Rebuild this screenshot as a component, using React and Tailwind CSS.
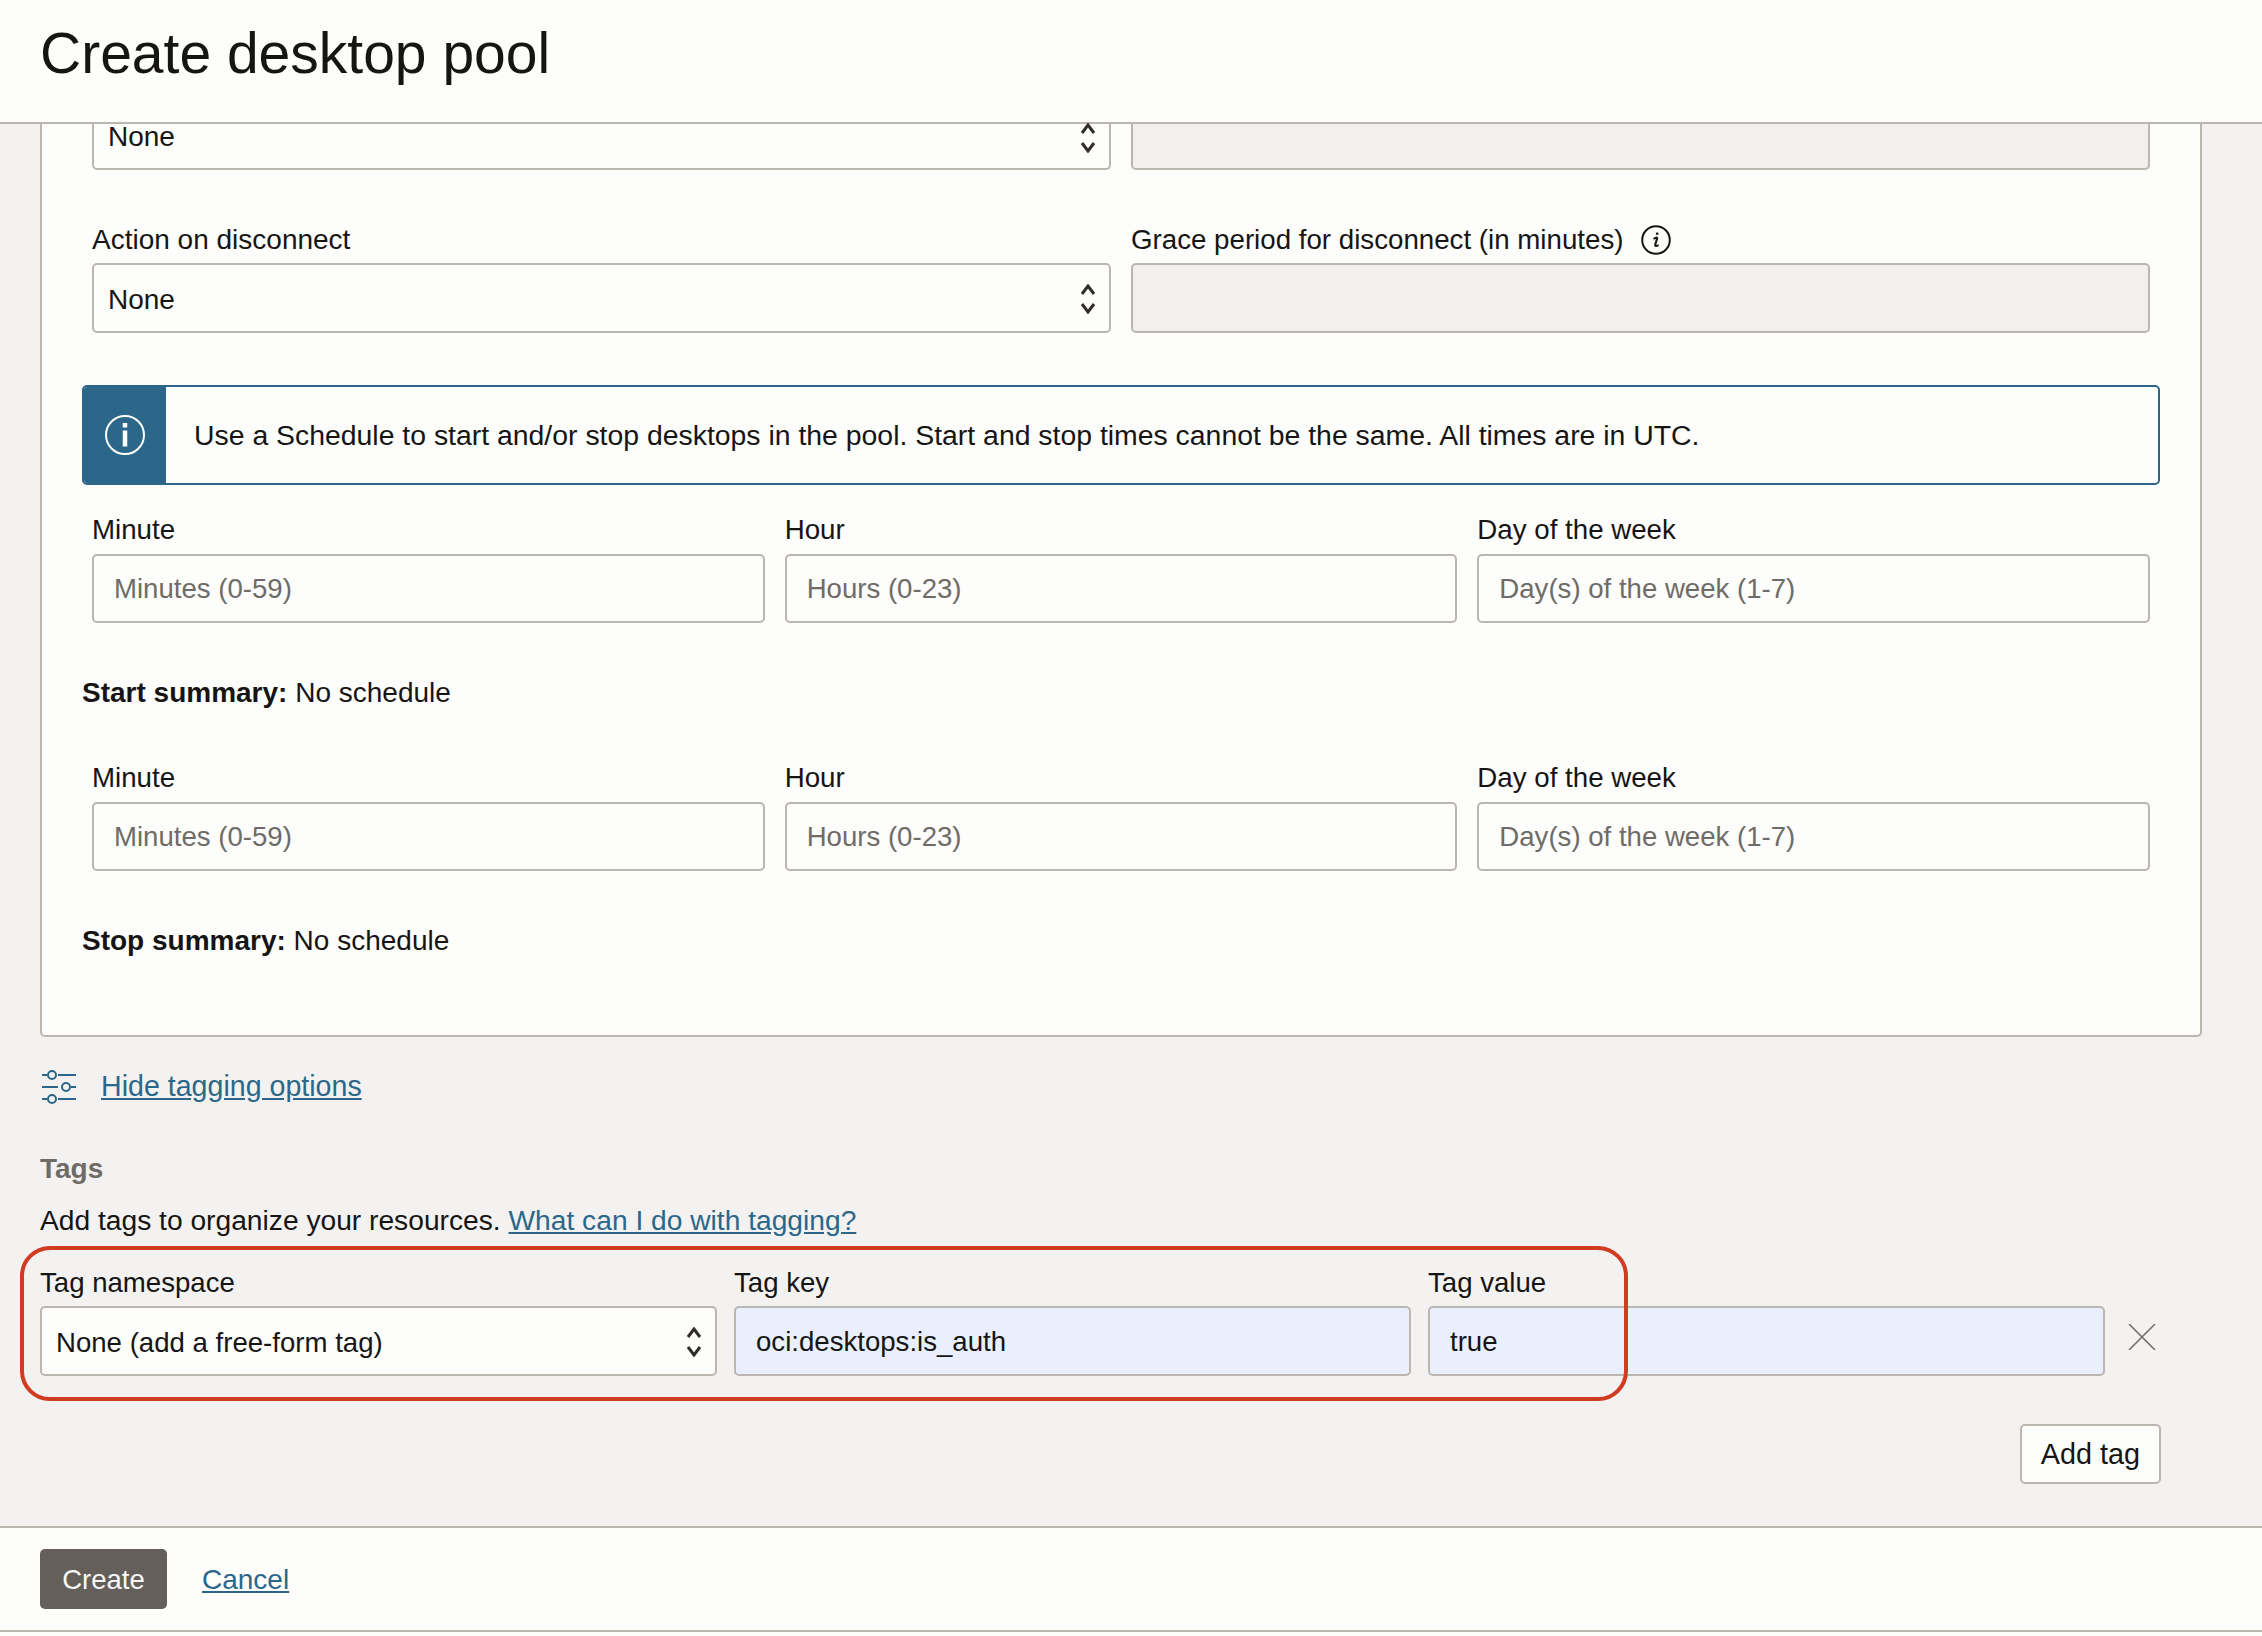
import React from "react";

const scheduleFields = [
  { label: "Minute", placeholder: "Minutes (0-59)" },
  { label: "Hour", placeholder: "Hours (0-23)" },
  { label: "Day of the week", placeholder: "Day(s) of the week (1-7)" },
];

function Chevrons({ className = "mt-[2px]" }) {
  return (
    <svg width="16" height="30" viewBox="0 0 16 30" fill="none" stroke="#312d2a" strokeWidth="3" className={className}>
      <path d="M2 10 8 2l6 8" />
      <path d="M2 20l6 8 6-8" />
    </svg>
  );
}

function Select({ value }) {
  return (
    <div className="flex h-[70px] items-center justify-between rounded-[5px] border-2 border-[#bcb6b1] bg-[#fdfdfc] pl-[14px] pr-[13px]">
      <span className="mt-[3px] leading-[24px]">{value}</span>
      <Chevrons />
    </div>
  );
}

function ScheduleRow({ summary, top }) {
  return (
    <>
      <div className={`grid grid-cols-3 gap-x-[20px] px-[10px] ${top}`}>
        {scheduleFields.map((field) => (
          <div key={field.label}>
            <div className="mb-[8px] h-[34px] text-[27.7px] leading-[36px]">{field.label}</div>
            <div className="flex h-[69px] items-center rounded-[5px] border-2 border-[#bcb6b1] bg-[#fdfdfc] pl-[20px] text-[27.6px] text-[#6f6b67]">
              {field.placeholder}
            </div>
          </div>
        ))}
      </div>
      <div className="mt-[52px] h-[34px] leading-[36px]">
        <span className="font-bold">{summary}:</span> No schedule
      </div>
    </>
  );
}

export default function App() {
  return (
    <div className="flex h-[1636px] flex-col overflow-hidden bg-[#f3f2f1] font-['Liberation_Sans',Arial,sans-serif] text-[28px] text-[#161513]">
      <header className="h-[124px] shrink-0 border-b-2 border-[#bcb6b1] bg-[#fdfdfc] pl-[40px] pt-[19px] text-[57px] leading-[68px]">
        Create desktop pool
      </header>

      <main className="min-h-0 flex-1 px-[40px]">
        <div className="h-[913px] w-[2162px] rounded-b-[5px] border-x-2 border-b-2 border-[#bcb6b1] bg-[#fdfdfc] px-[40px]">
          {/* this row is scrolled under the header, so its fields have no top edge */}
          <div className="grid grid-cols-2 gap-x-[20px] px-[10px]">
            <div className="flex h-[46px] items-start justify-between rounded-b-[5px] border-x-2 border-b-2 border-[#bcb6b1] pl-[14px] pr-[13px]">
              <span className="mt-[1px] leading-[24px]">None</span>
              <Chevrons className="-mt-[1px]" />
            </div>
            <div className="h-[46px] rounded-b-[5px] border-x-2 border-b-2 border-[#bcb6b1] bg-[#f1f0ef]" />
          </div>

          <div className="mt-[53px] grid grid-cols-2 gap-x-[20px] px-[10px]">
            <div>
              <div className="mb-[6px] h-[34px] leading-[34px]">Action on disconnect</div>
              <Select value="None" />
            </div>
            <div>
              <div className="mb-[6px] flex h-[34px] items-center gap-[18px] text-[27.7px] leading-[34px]">
                Grace period for disconnect (in minutes)
                <svg width="30" height="30" viewBox="0 0 30 30" fill="none" stroke="#161513" strokeWidth="2">
                  <circle cx="15" cy="15" r="13.8" />
                  <path d="M16.2 7.6v2.2" strokeWidth="2.4" />
                  <path d="M12.6 14q3-2.4 3.6-.6l-2 6.2q-.5 2.6 3.4.6" />
                </svg>
              </div>
              <div className="h-[70px] rounded-[5px] border-2 border-[#bcb6b1] bg-[#f1f0ef]" />
            </div>
          </div>

          <div className="mt-[52px] flex h-[100px] overflow-hidden rounded-[5px] border-2 border-[#2c6789]">
            <div className="flex w-[82px] shrink-0 items-center justify-center bg-[#2c6789]">
              <svg width="42" height="42" viewBox="0 0 42 42" fill="none" stroke="#fff" strokeWidth="2">
                <circle cx="21" cy="21" r="19" />
                <path d="M21 9v4.5" strokeWidth="4.5" />
                <path d="M21 16.5v16" strokeWidth="4.5" />
              </svg>
            </div>
            <div className="flex items-center pl-[28px] text-[28.4px]">
              Use a Schedule to start and/or stop desktops in the pool. Start and stop times cannot be the same. All times are in UTC.
            </div>
          </div>

          <ScheduleRow summary="Start summary" top="mt-[27px]" />
          <ScheduleRow summary="Stop summary" top="mt-[51px]" />
        </div>

        <div className="mt-[32px] flex h-[36px] items-center">
          <svg width="34" height="36" viewBox="0 0 34 36" fill="none" stroke="#2c6789" strokeWidth="2" className="ml-[2px]">
            <path d="M0 6h5M16 6h18M0 18h16M29 18h5M0 30h5M16 30h18" />
            <circle cx="10" cy="6" r="4" />
            <circle cx="24" cy="18" r="4" />
            <circle cx="10" cy="30" r="4" />
          </svg>
          <a className="ml-[25px] -mt-[2px] text-[28.6px] text-[#2c6789] underline">Hide tagging options</a>
        </div>

        <div className="mt-[46px] h-[34px] font-bold leading-[36px] text-[#6f6b67]">Tags</div>
        <div className="mt-[18px] h-[34px] text-[28.2px] leading-[35px]">
          Add tags to organize your resources. <a className="text-[#2c6789] underline">What can I do with tagging?</a>
        </div>

        <div className="relative mt-[29px] flex items-end">
          <div className="grid w-[2065px] grid-cols-3 gap-x-[17px] text-[27.6px]">
            <div>
              <div className="mb-[6px] h-[34px] leading-[34px]">Tag namespace</div>
              <Select value="None (add a free-form tag)" />
            </div>
            <div>
              <div className="mb-[6px] h-[34px] leading-[34px]">Tag key</div>
              <div className="flex h-[70px] items-center rounded-[5px] border-2 border-[#bcb6b1] bg-[#e9effd] pl-[20px] pt-[2px]">oci:desktops:is_auth</div>
            </div>
            <div>
              <div className="mb-[6px] h-[34px] leading-[34px]">Tag value</div>
              <div className="flex h-[70px] items-center rounded-[5px] border-2 border-[#bcb6b1] bg-[#e9effd] pl-[20px] pt-[2px]">true</div>
            </div>
          </div>
          <svg width="28" height="26" viewBox="0 0 28 26" fill="none" stroke="#6f6b67" strokeWidth="1.5" className="mb-[26px] ml-[23px]">
            <path d="M1 0l26 26M27 0 1 26" />
          </svg>
          <div className="absolute -left-[20px] -top-[20px] h-[155px] w-[1608px] rounded-[30px] border-[4px] border-[#d13b22]" />
        </div>

        <div className="mt-[48px] flex justify-end pr-[61px]">
          <div className="flex h-[60px] w-[141px] items-center justify-center rounded-[5px] border-2 border-[#bcb6b1] bg-[#fdfdfc] pt-[2px] text-[28.8px]">Add tag</div>
        </div>
      </main>

      <footer className="flex h-[106px] shrink-0 items-start gap-[35px] border-y-2 border-[#bcb6b1] bg-[#fdfdfc] pl-[40px] pt-[21px]">
        <div className="flex h-[60px] w-[127px] items-center justify-center rounded-[5px] bg-[#645f5a] pt-[2px] text-[27.5px] text-[#f8f7f6]">Create</div>
        <a className="mt-[14px] leading-[34px] text-[#2c6789] underline">Cancel</a>
      </footer>
      <div className="h-[4px] shrink-0 bg-[#fdfdfc]" />
    </div>
  );
}
